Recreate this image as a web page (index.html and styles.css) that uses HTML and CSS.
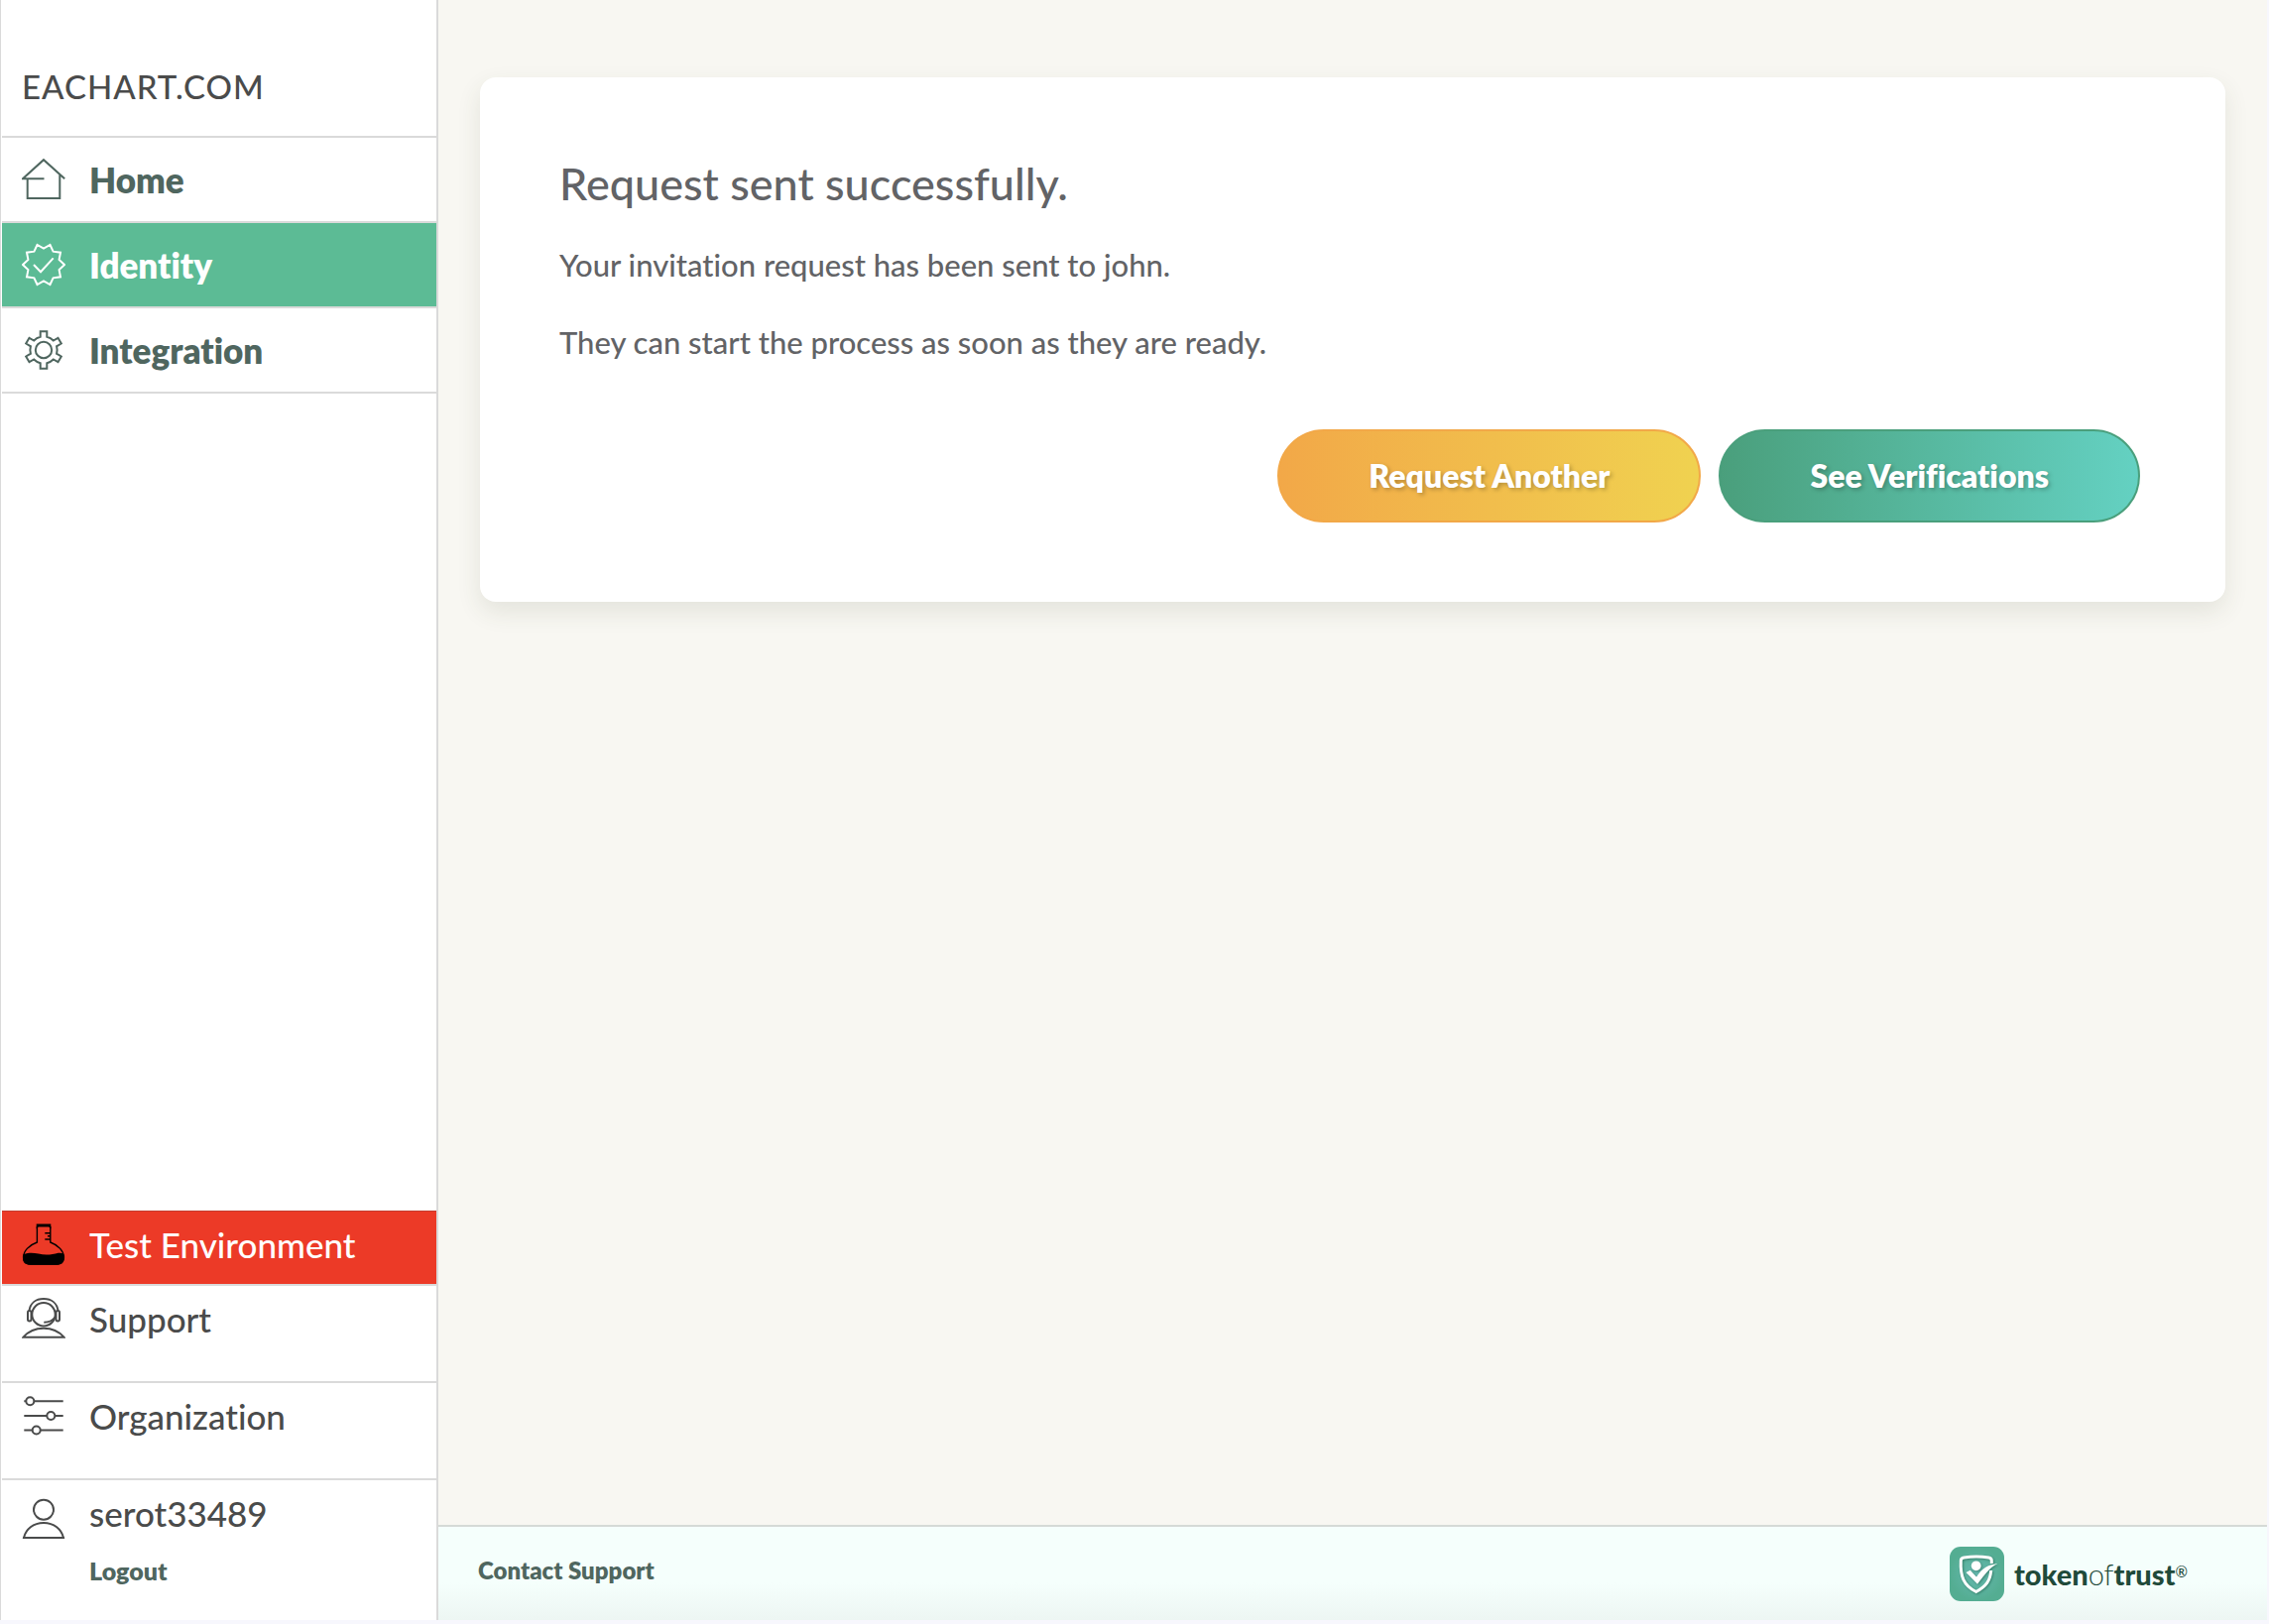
FILE: index.html
```html
<!DOCTYPE html>
<html lang="en">
<head>
<meta charset="utf-8">
<title>Request sent</title>
<link rel="stylesheet" href="styles.css">
</head>
<body>
<div class="app">
  <aside class="sidebar">
    <div class="site-name">EACHART.COM</div>
    <nav class="nav">
      <a class="nav-item" href="#home">
        <svg class="icon" viewBox="0 0 44 44" aria-hidden="true"><path d="M22.5 21.3H1L22 2.2l21.2 19M5.7 21.3V41h32.6V17"/></svg>
        <span>Home</span>
      </a>
      <a class="nav-item nav-item-active" href="#identity">
        <svg class="icon" viewBox="-22 -22 44 44" aria-hidden="true"><path d="M21 0 15.6 5.1 17 12.3 9.6 13.3 6.5 20 0 16.4-6.5 20-9.6 13.3-17 12.3-15.6 5.1-21 0-15.6-5.1-17-12.3-9.6-13.3-6.5-20 0-16.4 6.5-20 9.6-13.3 17-12.3 15.6-5.1ZM-10 0-3 7.2 9.7-6.7"/></svg>
        <span>Identity</span>
      </a>
      <a class="nav-item" href="#integration">
        <svg class="icon" viewBox="-22 -22 44 44" aria-hidden="true"><path d="M-3.3-13.2v-5.5h6.6v5.5A13.6 13.6 0 0 1 9.8-9.5L14.5-12.2 17.8-6.5 13.1-3.7A13.6 13.6 0 0 1 13.1 3.7L17.8 6.5 14.5 12.2 9.8 9.5A13.6 13.6 0 0 1 3.3 13.2v5.5h-6.6v-5.5A13.6 13.6 0 0 1-9.8 9.5L-14.5 12.2-17.8 6.5-13.1 3.7A13.6 13.6 0 0 1-13.1-3.7L-17.8-6.5-14.5-12.2-9.8-9.5A13.6 13.6 0 0 1-3.3-13.2Z"/><circle r="8.2"/></svg>
        <span>Integration</span>
      </a>
    </nav>
    <nav class="tools">
      <a class="tool tool-test" href="#test">
        <svg class="icon" viewBox="0 0 44 44" aria-hidden="true"><path d="M15.400 4v16C7 23 1.600 29 1.600 35c0 5 3 7 7 7h26.800c4 0 7-2 7-7 0-6-5.400-12-13.600-15V4" stroke-width="1.400"/><path class="solid" d="M14.700 1.500h14.600v5l-2-2H16.700l-2 2ZM1.700 32c6-2 10-1.500 15-.5 7 2 14 1 20-.7 2-.4 4 0 5.300.8 1.600 7-.5 11-6.500 11.200h-27C2 42.500 0 39 1.700 32Z"/><path d="M23.300 10.700H29M26 13.700h3M23.300 17H29" stroke-width="1.500"/></svg>
        <span>Test Environment</span>
      </a>
      <a class="tool" href="#support">
        <svg class="icon" viewBox="0 0 44 44" aria-hidden="true"><circle cx="22" cy="17.700" r="11.700"/><path d="M7.500 14C8.500 6.500 14 2 22 2s13.500 4.500 14.500 12M22.300 25.700c5 0 8.700-1.700 11-5M1.500 40.700C7 34.500 13.500 31.800 22 31.800s15 2.700 20.500 8.900Z"/><rect x="6" y="14" width="3.500" height="10.500" rx="1.700"/><rect x="34.500" y="14" width="3.500" height="10.500" rx="1.700"/></svg>
        <span>Support</span>
      </a>
      <a class="tool" href="#organization">
        <svg class="icon" viewBox="0 0 44 44" aria-hidden="true"><path d="M2.300 7.300h2M12.300 7.300h29.400M2.300 22h23M33.300 22h8.400M2.300 36.500h8.400M18.700 36.500h23"/><circle cx="8.300" cy="7.300" r="4"/><circle cx="29.300" cy="22" r="4"/><circle cx="14.700" cy="36.500" r="4"/></svg>
        <span>Organization</span>
      </a>
      <div class="account">
        <svg class="icon" viewBox="0 0 44 44" aria-hidden="true"><circle cx="22" cy="12.700" r="10"/><path d="M2 41c2-8.500 9.500-15 20-15s18 6.500 20 15ZM1 41h42"/></svg>
        <div class="account-text">
          <span>serot33489</span>
          <a class="logout" href="#logout">Logout</a>
        </div>
      </div>
    </nav>
  </aside>
  <div class="page">
    <main class="content">
      <section class="card">
        <h1>Request sent successfully.</h1>
        <p>Your invitation request has been sent to john.</p>
        <p>They can start the process as soon as they are ready.</p>
        <div class="actions">
          <button class="btn btn-amber" type="button">Request Another</button>
          <button class="btn btn-green" type="button">See Verifications</button>
        </div>
      </section>
    </main>
    <footer class="footer">
      <a class="contact" href="#contact">Contact Support</a>
      <a class="brand" href="#brand">
        <svg class="brand-mark" viewBox="0 0 55 55" aria-hidden="true">
          <defs><radialGradient id="mark"><stop offset="0" stop-color="#66b9b0"/><stop offset="1" stop-color="#54ad92"/></radialGradient></defs>
          <rect width="55" height="55" rx="11" fill="url(#mark)"/>
          <g class="brand-shield">
            <path d="M42.300 17v-3c0-2-1-2.600-3-3C31 9.500 23 9.500 14.500 11c-2 .4-3.200 1-3.200 3C10.500 30 14 39 26.700 45.500 37 40 41 34 41.700 24" fill="none" stroke="#fff" stroke-width="3"/>
            <circle cx="26.700" cy="19.300" r="4.900" fill="#fff"/>
            <path d="M16.500 26 20.700 23.700 27 30.500C33 21.500 38 18.500 48.300 17 42 20.500 39 23.500 28 37.700Z" fill="#fff"/>
          </g>
        </svg>
        <span class="brand-name">token<span class="thin">of</span>trust<sup>®</sup></span>
      </a>
    </footer>
  </div>
</div>
</body>
</html>
```
FILE: styles.css
```css
* { box-sizing: border-box; }

body {
  margin: 0;
  background: #f7f7fd;
  color: #4a4b4b;
  font-family: Lato, "Liberation Sans", sans-serif;
  font-size: 32px;
  font-weight: 500;
  font-variant-ligatures: no-common-ligatures;
}

a { color: inherit; text-decoration: none; }

.app {
  display: flex;
  min-height: calc(100vh - 4px);
  margin: 0 2px 4px 0;
}

.sidebar {
  display: flex;
  flex: none;
  flex-direction: column;
  width: 442px;
  padding-left: 1px;
  border-right: 2px solid #dadada;
  border-left: 1px solid #dadada;
  background: #fff;
}

.site-name {
  padding: 67px 20px 30px;
  border-bottom: 2px solid #dadada;
  font-size: 33px;
  line-height: 40px;
  letter-spacing: 1px;
}

.nav-item {
  display: flex;
  align-items: center;
  gap: 24px;
  height: 86px;
  padding: 0 20px;
  border-bottom: 2px solid #dadada;
  color: #4f665f;
  font-size: 35px;
  font-weight: 800;
}

.nav-item-active { background: #5cbb95; color: #fff; }

.icon {
  flex: none;
  width: 44px;
  height: 44px;
  fill: none;
  stroke: currentColor;
  stroke-width: 2;
}

.icon .solid { fill: currentColor; stroke: none; }

.tools { margin-top: auto; font-size: 35px; line-height: 44px; }

.tool {
  display: flex;
  gap: 24px;
  min-height: 98px;
  padding: 11px 20px;
  border-bottom: 2px solid #dadada;
}

.tool-test {
  min-height: 76px;
  border-top: 1px solid #c43c30;
  background: #ec3a27;
  color: #fff;
}

.tool-test .icon { color: #000; }

.account { display: flex; gap: 24px; padding: 11px 20px 30px; }
.account .icon { margin-top: 6px; }
.account-text { display: flex; flex-direction: column; gap: 16px; }

.logout {
  color: #4f665f;
  font-size: 25px;
  font-weight: 800;
  line-height: 40px;
}

.page {
  display: flex;
  flex: 1;
  flex-direction: column;
  min-width: 0;
  background: #f8f7f2;
}

.content { flex: 1; padding: 78px 42px; }

.card {
  padding: 80px 86px 80px 80px;
  border-radius: 16px;
  background: #fff;
  box-shadow: 0 10px 24px rgba(60, 70, 50, .11);
  color: #626366;
}

h1 { margin: 0 0 31px; font-size: 45px; font-weight: 500; line-height: 54px; }
p { margin: 0 0 30px; font-size: 31px; line-height: 48px; }

.actions { display: flex; justify-content: flex-end; gap: 18px; margin-top: 64px; }

.btn {
  height: 94px;
  padding: 0 90px;
  border: 2px solid;
  border-radius: 47px;
  color: #fff;
  font: 800 32px/40px Lato, "Liberation Sans", sans-serif;
  font-variant-ligatures: no-common-ligatures;
  text-shadow: 2px 2px 4px rgba(0, 0, 0, .25);
}

.btn-amber { border-color: #f2a848; background: linear-gradient(90deg, #f2a848, #f0d250); }
.btn-green { border-color: #4a9f7c; background: linear-gradient(90deg, #4a9f7c, #64d1c2); }

.footer {
  display: flex;
  align-items: flex-start;
  justify-content: space-between;
  min-height: 96px;
  padding: 20px 80px 0 40px;
  border-top: 2px solid #d5dad6;
  background: linear-gradient(#f5fffc 60%, #edf6f3);
}

.contact {
  color: #4f665f;
  font-size: 24px;
  font-weight: 800;
  line-height: 48px;
}

.brand { display: flex; align-items: center; gap: 10px; color: #1f4a3a; }
.brand-mark { width: 55px; height: 55px; }
.brand-shield { filter: drop-shadow(1px 1px 1px rgba(20, 80, 60, .5)); }
.brand-name { font-size: 29px; font-weight: 900; line-height: 40px; }
.brand-name .thin { font-weight: 300; }
.brand-name sup { font-size: 15px; font-weight: 500; vertical-align: 8px; line-height: 0; }
```
